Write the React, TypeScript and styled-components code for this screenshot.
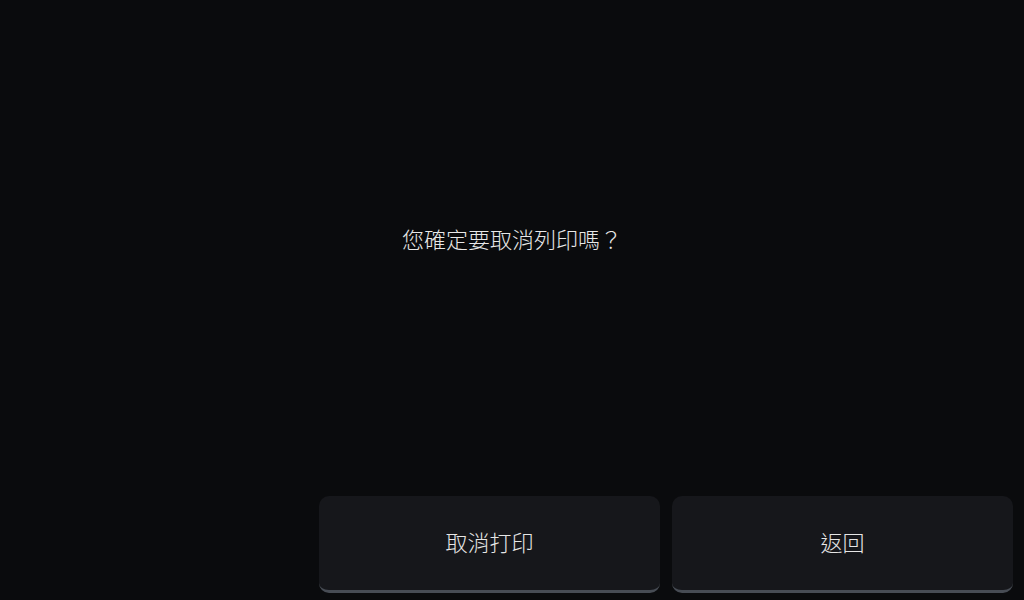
import React from 'react'
import styled, { createGlobalStyle } from 'styled-components'

const GlobalStyle = createGlobalStyle`
  html, body {
    margin: 0;
    padding: 0;
    background: #0a0b0d;
  }
  body {
    font-family: "Noto Sans CJK TC", "Noto Sans", sans-serif;
    color: #e6e6e6;
  }
`

const Screen = styled.div`
  width: 1024px;
  height: 600px;
  display: flex;
  flex-direction: column;
  background: #0a0b0d;
`

const Message = styled.div`
  flex: 1;
  display: flex;
  align-items: center;
  justify-content: center;
  padding-bottom: 20px;
  font-size: 22px;
  font-weight: 300;
  color: #e8e8e8;
`

const Actions = styled.div`
  display: flex;
  gap: 12px;
  padding: 0 11px 7px 319px;
`

const ActionButton = styled.button`
  flex: 1;
  height: 97px;
  border: none;
  border-bottom: 3px solid #474c54;
  border-radius: 10px;
  background: #16171b;
  color: #e6e6e6;
  font-family: inherit;
  font-size: 22px;
  font-weight: 300;
  cursor: pointer;
  padding: 0 0 5px;
`

const App: React.FunctionComponent = () => {
	return (
		<>
			<GlobalStyle />
			<Screen>
				<Message>您確定要取消列印嗎？</Message>
				<Actions>
					<ActionButton>取消打印</ActionButton>
					<ActionButton>返回</ActionButton>
				</Actions>
			</Screen>
		</>
	)
}

export default App
